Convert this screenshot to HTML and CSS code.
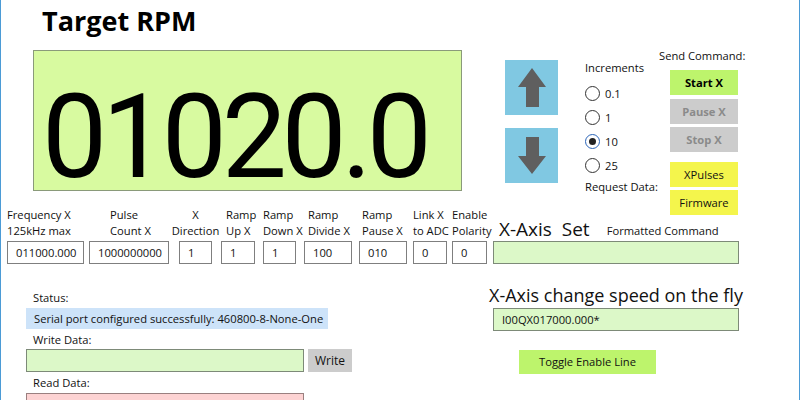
FILE: index.html
```html
<!DOCTYPE html>
<html>
<head>
<meta charset="utf-8">
<link rel="stylesheet" href="styles.css">
</head>
<body>
<div class="app">
  <div class="top">
    <div class="rpm">
      <div class="title">Target RPM</div>
      <div class="display"><span class="digits">01020.0</span></div>
    </div>
    <div class="arrows">
      <div class="arrow-btn">
        <svg width="53" height="55" viewBox="0 0 53 55"><path d="M27 8 L41 27 L34 27 L34 47 L21 47 L21 27 L13 27 Z" fill="#5f5f5f"/></svg>
      </div>
      <div class="arrow-btn">
        <svg width="53" height="55" viewBox="0 0 53 55"><path d="M21 9 L34 9 L34 28 L41 28 L27 46 L13 28 L21 28 Z" fill="#5f5f5f"/></svg>
      </div>
    </div>
    <div class="increments">
      <div class="line">Increments</div>
      <div class="radios">
        <div class="radio-row"><span class="radio"></span><span>0.1</span></div>
        <div class="radio-row"><span class="radio"></span><span>1</span></div>
        <div class="radio-row"><span class="radio checked"></span><span>10</span></div>
        <div class="radio-row"><span class="radio"></span><span>25</span></div>
      </div>
      <div class="line request">Request Data:</div>
    </div>
    <div class="commands">
      <div class="line">Send Command:</div>
      <div class="cmd cmd-start">Start X</div>
      <div class="cmd cmd-off cmd-pause">Pause X</div>
      <div class="cmd cmd-off cmd-stop">Stop X</div>
      <div class="cmd cmd-yellow cmd-pulses">XPulses</div>
      <div class="cmd cmd-yellow cmd-fw">Firmware</div>
    </div>
  </div>

  <div class="params">
    <div class="field f-freq"><div class="flabel"><span>Frequency X</span><span>125kHz max</span></div><div class="fbox">011000.000</div></div>
    <div class="field f-pulse"><div class="flabel"><span>Pulse</span><span>Count X</span></div><div class="fbox">1000000000</div></div>
    <div class="field f-dir"><div class="flabel centered"><span>X</span><span>Direction</span></div><div class="fbox">1</div></div>
    <div class="field f-up"><div class="flabel"><span>Ramp</span><span>Up X</span></div><div class="fbox">1</div></div>
    <div class="field f-down"><div class="flabel"><span>Ramp</span><span>Down X</span></div><div class="fbox">1</div></div>
    <div class="field f-divide"><div class="flabel"><span>Ramp</span><span>Divide X</span></div><div class="fbox">100</div></div>
    <div class="field f-pause"><div class="flabel"><span>Ramp</span><span>Pause X</span></div><div class="fbox">010</div></div>
    <div class="field f-link"><div class="flabel"><span>Link X</span><span>to ADC</span></div><div class="fbox">0</div></div>
    <div class="field f-enable"><div class="flabel"><span>Enable</span><span>Polarity</span></div><div class="fbox">0</div></div>
    <div class="field f-fmt">
      <div class="fmt-label"><span class="axis-set">X-Axis  Set</span><span class="fmt-cmd">Formatted Command</span></div>
      <div class="fbox green"></div>
    </div>
  </div>

  <div class="bottom">
    <div class="serial">
      <div class="line slabel">Status:</div>
      <div class="status-bar">Serial port configured successfully: 460800-8-None-One</div>
      <div class="line slabel gap3">Write Data:</div>
      <div class="write-row">
        <div class="wbox green"></div>
        <div class="write-btn">Write</div>
      </div>
      <div class="line slabel gap3">Read Data:</div>
      <div class="wbox pink"></div>
    </div>
    <div class="fly">
      <div class="fly-title">X-Axis change speed on the fly</div>
      <div class="fly-box green">I00QX017000.000*</div>
      <div class="toggle">Toggle Enable Line</div>
    </div>
  </div>
</div>
</body>
</html>
```

FILE: styles.css
```css
* { box-sizing: border-box; margin: 0; padding: 0; }
body {
  margin: 0;
  font-family: "Open Sans", "Noto Sans", sans-serif;
  font-size: 11.2px;
  color: #111;
  background: #fff;
}
.app {
  width: 800px;
  height: 400px;
  border-left: 1px solid #4b9bd6;
  border-right: 1px solid #4b9bd6;
  overflow: hidden;
}
.line { line-height: 16px; white-space: nowrap; }

/* top */
.top { display: flex; height: 206px; }
.rpm { width: 461px; padding-left: 32px; }
.title {
  font-size: 27px;
  font-weight: 700;
  line-height: 30px;
  margin: 6px 0 0 9px;
  color: #000;
}
.display {
  margin-top: 14px;
  width: 429px;
  height: 141px;
  border: 1px solid #8a9a7a;
  background: #d8faa0;
  padding: 28px 0 0 8px;
}
.digits {
  display: block;
  font-family: Roboto, "Open Sans", sans-serif;
  font-size: 116px;
  line-height: 116px;
  letter-spacing: -5.3px;
  color: #000;
  white-space: nowrap;
}
.arrows {
  margin-left: 43px;
  padding-top: 60px;
  display: flex;
  flex-direction: column;
  gap: 13px;
}
.arrow-btn { width: 53px; height: 55px; background: #80c8e2; }
.arrow-btn svg { display: block; }

.increments { margin-left: 27px; padding-top: 60px; width: 74px; }
.radios { margin-top: 5px; }
.radio-row { height: 24px; display: flex; align-items: center; gap: 5px; }
.radio {
  width: 15px;
  height: 15px;
  border: 1.5px solid #333;
  border-radius: 50%;
  display: flex;
  align-items: center;
  justify-content: center;
}
.radio.checked { border-color: #2a64b8; }
.radio.checked::after {
  content: "";
  width: 7px;
  height: 7px;
  border-radius: 50%;
  background: #222;
}
.request { margin-top: 2px; }

.commands { padding-top: 48px; width: 140px; }
.cmd {
  margin-left: 11px;
  width: 68px;
  height: 25px;
  line-height: 25px;
  text-align: center;
}
.cmd-start { margin-top: 6px; background: #bdf46c; font-weight: 700; color: #000; }
.cmd-off { background: #cccccc; color: #8a8a8a; font-weight: 700; }
.cmd-pause { margin-top: 4px; }
.cmd-stop { margin-top: 3px; }
.cmd-yellow { background: #f4f54c; color: #111; }
.cmd-pulses { margin-top: 10px; }
.cmd-fw { margin-top: 3px; }

/* params */
.params { display: flex; height: 58px; padding-top: 1px; }
.field { display: flex; flex-direction: column; }
.flabel {
  height: 32px;
  display: flex;
  flex-direction: column;
  align-items: flex-start;
  white-space: nowrap;
}
.flabel span { display: block; height: 16px; line-height: 16px; }
.flabel.centered { align-items: center; }
.fbox {
  margin-top: 2px;
  height: 23px;
  border: 1px solid #7f7f7f;
  background: #fff;
  padding-left: 8px;
  line-height: 21px;
  white-space: nowrap;
  overflow: hidden;
}
.green { background: #dcf8c8; border: 1px solid #7d8a78; }
.pink { background: #fdd3d3; border: 1px solid #9a8080; }

.f-freq { margin-left: 6px; width: 77px; }
.f-pulse { margin-left: 5px; width: 80px; }
.f-pulse .flabel { padding-left: 21px; }
.f-dir { margin-left: 10px; width: 33px; }
.f-up { margin-left: 9px; width: 34px; }
.f-up .flabel { padding-left: 5px; }
.f-down { margin-left: 8px; width: 33px; }
.f-divide { margin-left: 8px; width: 48px; }
.f-divide .flabel { padding-left: 4px; }
.f-pause { margin-left: 7px; width: 48px; }
.f-pause .flabel { padding-left: 3px; }
.f-link { margin-left: 6px; width: 34px; }
.f-enable { margin-left: 5px; width: 35px; }
.f-fmt { margin-left: 6px; width: 246px; }
.fmt-label {
  height: 32px;
  display: flex;
  align-items: baseline;
  padding-left: 6px;
  padding-top: 11px;
  white-space: nowrap;
}
.axis-set { font-size: 19px; line-height: 22px; white-space: pre; color: #111; }
.fmt-cmd { margin-left: 17px; position: relative; top: -1px; }

/* bottom */
.bottom { display: flex; }
.serial { margin-left: 25px; width: 327px; padding-top: 26px; }
.slabel { margin-left: 7px; }
.gap3 { margin-top: 3px; }
.status-bar {
  margin-top: 2px;
  width: 302px;
  height: 21px;
  line-height: 21px;
  background: #cde3f9;
  padding-left: 8px;
  white-space: nowrap;
}
.write-row { margin-top: 1px; display: flex; gap: 4px; }
.wbox { width: 278px; height: 23px; }
.serial > .wbox { margin-top: 2px; }
.write-btn {
  width: 44px;
  height: 23px;
  line-height: 23px;
  background: #cccccc;
  text-align: center;
  color: #111;
  font-size: 12px;
}
.fly { margin-left: 136px; padding-top: 19px; }
.fly-title { font-size: 18px; line-height: 24px; white-space: nowrap; color: #111; }
.fly-box {
  margin: 1px 0 0 4px;
  width: 246px;
  height: 23px;
  line-height: 21px;
  padding-left: 8px;
}
.toggle {
  margin: 19px 0 0 30px;
  width: 137px;
  height: 24px;
  line-height: 24px;
  text-align: center;
  background: #bdf46c;
}
```
